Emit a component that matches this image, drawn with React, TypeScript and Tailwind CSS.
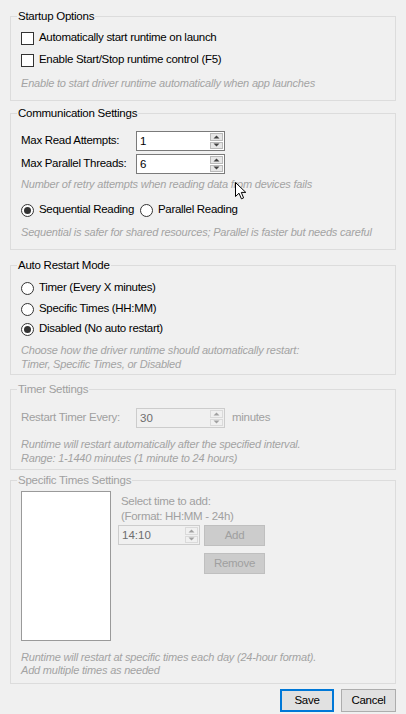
import React from "react";

const font = { fontFamily: '"Liberation Sans", Arial, sans-serif' };

function Group({
  title,
  disabled,
  className,
  children,
}: {
  title: string;
  disabled?: boolean;
  className?: string;
  children: React.ReactNode;
}) {
  return (
    <fieldset className={`mx-[10px] border border-[#dcdcdc] px-[10px] ${className ?? ""}`}>
      <legend
        className={`-ml-[4px] px-[1px] text-[11.5px] leading-[14px] tracking-[-0.25px] ${disabled ? "text-[#a0a0a0]" : "text-black"}`}
      >
        {title}
      </legend>
      {children}
    </fieldset>
  );
}

function Hint({ children, className }: { children: React.ReactNode; className?: string }) {
  return (
    <div className={`whitespace-nowrap text-[11px] italic tracking-[-0.2px] text-[#a3a3a3] ${className ?? ""}`}>
      {children}
    </div>
  );
}

function CheckRow({ label }: { label: string }) {
  return (
    <div className="flex h-[20px] items-center gap-[5px]">
      <span className="h-[13px] w-[13px] border border-[#333333] bg-white" />
      <span className="text-[11.5px] tracking-[-0.3px] text-black">{label}</span>
    </div>
  );
}

function Radio({ label, checked }: { label: string; checked?: boolean }) {
  return (
    <div className="flex h-[20px] items-center gap-[5px]">
      <span className="flex h-[13px] w-[13px] items-center justify-center rounded-full border border-[#333333] bg-white">
        {checked && <span className="h-[7px] w-[7px] rounded-full bg-[#333333]" />}
      </span>
      <span className="whitespace-nowrap text-[11.5px] tracking-[-0.3px] text-black">{label}</span>
    </div>
  );
}

function Arrow({ up, disabled }: { up?: boolean; disabled?: boolean }) {
  return (
    <svg width="7" height="4" viewBox="0 0 7 4">
      <path
        d={up ? "M0.5 3.5 L3.5 0.5 L6.5 3.5 Z" : "M0.5 0.5 L3.5 3.5 L6.5 0.5 Z"}
        fill={disabled ? "#a0a0a0" : "#404040"}
      />
    </svg>
  );
}

function Spin({ value, disabled, w = "w-[89px]" }: { value: string; disabled?: boolean; w?: string }) {
  return (
    <div
      className={`flex h-[20px] ${w} border ${disabled ? "border-[#cccccc] bg-[#f0f0f0] text-[#6d6d6d]" : "border-[#7a7a7a] bg-white text-black"}`}
    >
      <span className="flex-1 pl-[3px] text-[11.5px] leading-[18px]">{value}</span>
      <div className="my-[1px] mr-[1px] flex w-[13px] flex-col gap-[1px]">
        <div
          className={`flex flex-1 items-center justify-center border ${disabled ? "border-[#dadada] bg-[#f0f0f0]" : "border-[#b9b9b9] bg-[#e6e6e6]"}`}
        >
          <Arrow up disabled={disabled} />
        </div>
        <div
          className={`flex flex-1 items-center justify-center border ${disabled ? "border-[#dadada] bg-[#f0f0f0]" : "border-[#b9b9b9] bg-[#e6e6e6]"}`}
        >
          <Arrow disabled={disabled} />
        </div>
      </div>
    </div>
  );
}

function Label({ children, disabled }: { children: React.ReactNode; disabled?: boolean }) {
  return (
    <span
      className={`w-[115px] whitespace-nowrap text-[11.5px] tracking-[-0.3px] ${disabled ? "text-[#a0a0a0]" : "text-black"}`}
    >
      {children}
    </span>
  );
}

export default function App() {
  return (
    <div className="relative h-[714px] w-[406px] overflow-hidden bg-[#f0f0f0] pt-[9px]" style={font}>
      <Group title="Startup Options" className="pb-[10px]">
        <div className="pt-[5px]">
          <CheckRow label="Automatically start runtime on launch" />
          <div className="mt-[2px]">
            <CheckRow label="Enable Start/Stop runtime control (F5)" />
          </div>
          <Hint className="mt-[6px] leading-[14px]">
            Enable to start driver runtime automatically when app launches
          </Hint>
        </div>
      </Group>

      <Group title="Communication Settings" className="mt-[5px] pb-[10px]">
        <div className="pt-[11px]">
          <div className="flex items-center">
            <Label>Max Read Attempts:</Label>
            <Spin value="1" />
          </div>
          <div className="mt-[3px] flex items-center">
            <Label>Max Parallel Threads:</Label>
            <Spin value="6" />
          </div>
          <Hint className="mt-[3px] leading-[14px]">
            Number of retry attempts when reading data from devices fails
          </Hint>
          <div className="mt-[9px] flex items-center gap-[6px]">
            <Radio label="Sequential Reading" checked />
            <Radio label="Parallel Reading" />
          </div>
          <Hint className="mt-[5px] leading-[14px]">
            Sequential is safer for shared resources; Parallel is faster but needs careful
          </Hint>
        </div>
      </Group>

      <Group title="Auto Restart Mode" className="mt-[8px] pb-[3px]">
        <div className="pt-[6px]">
          <Radio label="Timer (Every X minutes)" />
          <div className="mt-[1px]">
            <Radio label="Specific Times (HH:MM)" />
          </div>
          <Radio label="Disabled (No auto restart)" checked />
          <Hint className="mt-[4px] leading-[14px]">
            Choose how the driver runtime should automatically restart:
            <br />
            Timer, Specific Times, or Disabled
          </Hint>
        </div>
      </Group>

      <Group title="Timer Settings" disabled className="mt-[7px] pb-[4px]">
        <div className="pt-[12px]">
          <div className="flex items-center">
            <Label disabled>Restart Timer Every:</Label>
            <Spin value="30" disabled />
            <span className="ml-[7px] text-[11.5px] tracking-[-0.3px] text-[#a0a0a0]">minutes</span>
          </div>
          <Hint className="mt-[9px] leading-[14px]">
            Runtime will restart automatically after the specified interval.
            <br />
            Range: 1-1440 minutes (1 minute to 24 hours)
          </Hint>
        </div>
      </Group>

      <Group title="Specific Times Settings" disabled className="mt-[3px] pb-[6px]">
        <div className="pt-[4px]">
          <div className="flex items-start gap-[7px]">
            <div className="h-[150px] w-[90px] border border-[#9a9a9a] bg-white" />
            <div className="flex flex-col">
              <div className="whitespace-nowrap pl-[3px] pt-[3px] text-[11.5px] leading-[15px] tracking-[-0.3px] text-[#a0a0a0]">
                Select time to add:
                <br />
                (Format: HH:MM - 24h)
              </div>
              <div className="mt-[1px] flex items-start gap-[4px]">
                <Spin value="14:10" disabled w="w-[82px]" />
                <div className="flex flex-col gap-[7px]">
                  <div className="flex h-[21px] w-[61px] items-center justify-center border border-[#bfbfbf] bg-[#cccccc] text-[11.5px] tracking-[-0.3px] text-[#a0a0a0]">
                    Add
                  </div>
                  <div className="flex h-[21px] w-[61px] items-center justify-center border border-[#bfbfbf] bg-[#cccccc] text-[11.5px] tracking-[-0.3px] text-[#a0a0a0]">
                    Remove
                  </div>
                </div>
              </div>
            </div>
          </div>
          <Hint className="mt-[10px] leading-[13px]">
            Runtime will restart at specific times each day (24-hour format).
            <br />
            Add multiple times as needed
          </Hint>
        </div>
      </Group>

      <div className="mr-[10px] mt-[5px] flex justify-end gap-[7px]">
        <button className="h-[23px] w-[54px] border-2 border-[#0078d7] bg-[#e1e1e1] text-[11.5px] tracking-[-0.3px] text-black">
          Save
        </button>
        <button className="h-[23px] w-[55px] border border-[#adadad] bg-[#e1e1e1] text-[11.5px] tracking-[-0.3px] text-black">
          Cancel
        </button>
      </div>

      <svg
        className="absolute left-[235px] top-[182px]"
        width="12"
        height="18"
        viewBox="0 0 12 18"
      >
        <path
          d="M0.5 0.5 L0.5 14.5 L4 11.2 L6.4 16.8 L8.6 15.9 L6.3 10.4 L10.8 10.4 Z"
          fill="white"
          stroke="black"
          strokeWidth="1"
          strokeLinejoin="round"
        />
      </svg>
    </div>
  );
}
